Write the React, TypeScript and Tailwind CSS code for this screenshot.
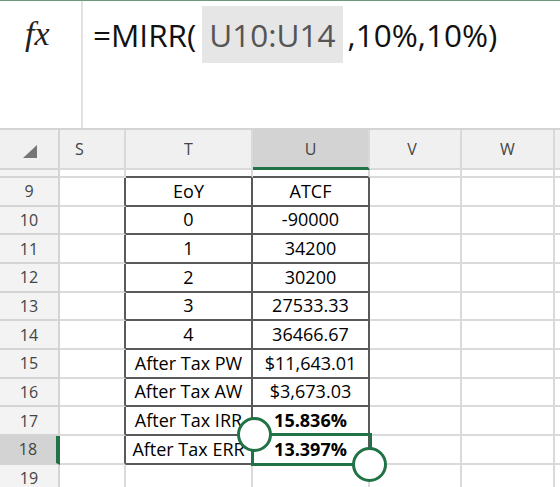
import React from "react";

type SheetRow = {
  n: string;
  t: string;
  u: string;
  bold?: boolean;
  active?: boolean;
};

const rows: SheetRow[] = [
  { n: "9", t: "EoY", u: "ATCF" },
  { n: "10", t: "0", u: "-90000" },
  { n: "11", t: "1", u: "34200" },
  { n: "12", t: "2", u: "30200" },
  { n: "13", t: "3", u: "27533.33" },
  { n: "14", t: "4", u: "36466.67" },
  { n: "15", t: "After Tax PW", u: "$11,643.01" },
  { n: "16", t: "After Tax AW", u: "$3,673.03" },
  { n: "17", t: "After Tax IRR", u: "15.836%", bold: true },
  { n: "18", t: "After Tax ERR", u: "13.397%", bold: true, active: true },
];

function FormulaBar() {
  return (
    <div className="flex h-[130px] border-t border-b-2 border-t-[#6b9a80] border-b-[#d4d4d4]">
      <div className="w-[83px] shrink-0 border-r-2 border-[#e1e1e1] pl-[25px] pt-[13px]">
        <span className="font-['Liberation_Serif',serif] italic text-[34px] leading-[40px] text-[#222]">
          fx
        </span>
      </div>
      <div className="flex-1 pl-[10px]">
        <div className="mt-[5px] flex h-[57px] items-center whitespace-nowrap text-[31.5px] text-[#111]">
          <span>=MIRR(</span>
          <span className="ml-[6px] flex h-full items-center bg-[#e6e6e6] px-[7px] text-[#555]">
            U10:U14
          </span>
          <span className="ml-[5px]">,10%,10%)</span>
        </div>
      </div>
    </div>
  );
}

function HeaderRow() {
  return (
    <div className="flex h-[40px] text-[16px] text-[#444]">
      <div className="flex w-[60px] shrink-0 items-end justify-end border-r-2 border-b-2 border-[#d4d4d4] bg-[#f0f0f0] pr-[21px] pb-[10px]">
        <svg width="14" height="13" viewBox="0 0 14 13">
          <polygon points="14,0 14,13 0,13" fill="#767676" />
        </svg>
      </div>
      <div className="flex w-[66px] shrink-0 items-center border-r-2 border-b-2 border-[#d9d9d9] bg-[#f0f0f0] pl-[15px]">
        S
      </div>
      <div className="flex w-[127px] shrink-0 items-center justify-center border-r-2 border-b-2 border-[#d9d9d9] bg-[#f0f0f0]">
        T
      </div>
      <div className="flex w-[117px] shrink-0 items-center justify-center border-r-2 border-b-[3px] border-r-[#d9d9d9] border-b-[#217346] bg-[#d3d3d3]">
        U
      </div>
      <div className="flex w-[92px] shrink-0 items-center justify-center border-r-2 border-b-2 border-[#d9d9d9] bg-[#f0f0f0] pr-[6px]">
        V
      </div>
      <div className="flex w-[93px] shrink-0 items-center justify-center border-r-2 border-b-2 border-[#d9d9d9] bg-[#f0f0f0]">
        W
      </div>
      <div className="flex-1 border-b-2 border-[#d9d9d9] bg-[#f0f0f0]" />
    </div>
  );
}

function PartialRow() {
  return (
    <div className="flex h-[8px]">
      <div className="w-[60px] shrink-0 overflow-hidden border-r-2 border-b-2 border-[#d4d4d4] bg-[#f3f3f3]">
        <div className="-mt-[20.67px] flex h-[26.67px] items-center justify-center text-[16px] text-[#444]">
          8
        </div>
      </div>
      <div className="w-[66px] shrink-0 border-r-2 border-b-2 border-[#dadada]" />
      <div className="w-[127px] shrink-0 border-r-2 border-b-2 border-r-[#dadada] border-b-[#595959]" />
      <div className="w-[117px] shrink-0 border-r-2 border-b-2 border-r-[#dadada] border-b-[#595959]" />
      <div className="w-[92px] shrink-0 border-r-2 border-b-2 border-[#dadada]" />
      <div className="w-[93px] shrink-0 border-r-2 border-b-2 border-[#dadada]" />
      <div className="flex-1 border-b-2 border-[#dadada]" />
    </div>
  );
}

function Selection() {
  return (
    <>
      <div className="absolute -top-[2.5px] -left-[2px] h-[33px] w-[120.5px] border-[3px] border-[#217346]" />
      <div className="absolute -top-[18.5px] -left-[16.5px] h-[35px] w-[35px] rounded-full border-[3.5px] border-[#217346] bg-white" />
      <div className="absolute top-[11.5px] left-[99px] h-[35px] w-[35px] rounded-full border-[3.5px] border-[#217346] bg-white" />
    </>
  );
}

function Row({ row }: { row: SheetRow }) {
  return (
    <div className="flex h-[28.67px] text-[18px]">
      {row.active ? (
        <div className="flex w-[60px] shrink-0 items-center justify-center border-r-4 border-b-2 border-r-[#217346] border-b-[#d4d4d4] bg-[#d3d3d3] text-[16px] text-[#444]">
          {row.n}
        </div>
      ) : (
        <div className="flex w-[60px] shrink-0 items-center justify-center border-r-2 border-b-2 border-[#d4d4d4] bg-[#f3f3f3] text-[16px] text-[#444]">
          {row.n}
        </div>
      )}
      <div className="w-[66px] shrink-0 border-r-2 border-b-2 border-r-[#595959] border-b-[#dadada]" />
      <div className="flex w-[127px] shrink-0 items-center justify-center overflow-hidden whitespace-nowrap border-r-2 border-b-2 border-[#595959]">
        {row.t}
      </div>
      <div
        className={
          row.bold
            ? "relative flex w-[117px] shrink-0 items-center justify-center whitespace-nowrap border-r-2 border-b-2 border-[#595959] font-bold"
            : "relative flex w-[117px] shrink-0 items-center justify-center whitespace-nowrap border-r-2 border-b-2 border-[#595959]"
        }
      >
        {row.u}
        {row.active && <Selection />}
      </div>
      <div className="w-[92px] shrink-0 border-r-2 border-b-2 border-[#dadada]" />
      <div className="w-[93px] shrink-0 border-r-2 border-b-2 border-[#dadada]" />
      <div className="flex-1 border-b-2 border-[#dadada]" />
    </div>
  );
}

function EmptyRow({ n }: { n: string }) {
  return (
    <div className="flex h-[28.67px]">
      <div className="flex w-[60px] shrink-0 items-center justify-center border-r-2 border-b-2 border-[#d4d4d4] bg-[#f3f3f3] text-[16px] text-[#444]">
        {n}
      </div>
      <div className="w-[66px] shrink-0 border-r-2 border-b-2 border-[#dadada]" />
      <div className="w-[127px] shrink-0 border-r-2 border-b-2 border-[#dadada]" />
      <div className="w-[117px] shrink-0 border-r-2 border-b-2 border-[#dadada]" />
      <div className="w-[92px] shrink-0 border-r-2 border-b-2 border-[#dadada]" />
      <div className="w-[93px] shrink-0 border-r-2 border-b-2 border-[#dadada]" />
      <div className="flex-1 border-b-2 border-[#dadada]" />
    </div>
  );
}

export default function App() {
  return (
    <div className="h-[487px] w-[560px] overflow-hidden bg-white font-['Open_Sans',sans-serif] text-black">
      <FormulaBar />
      <HeaderRow />
      <PartialRow />
      {rows.map((row) => (
        <Row key={row.n} row={row} />
      ))}
      <EmptyRow n="19" />
    </div>
  );
}
